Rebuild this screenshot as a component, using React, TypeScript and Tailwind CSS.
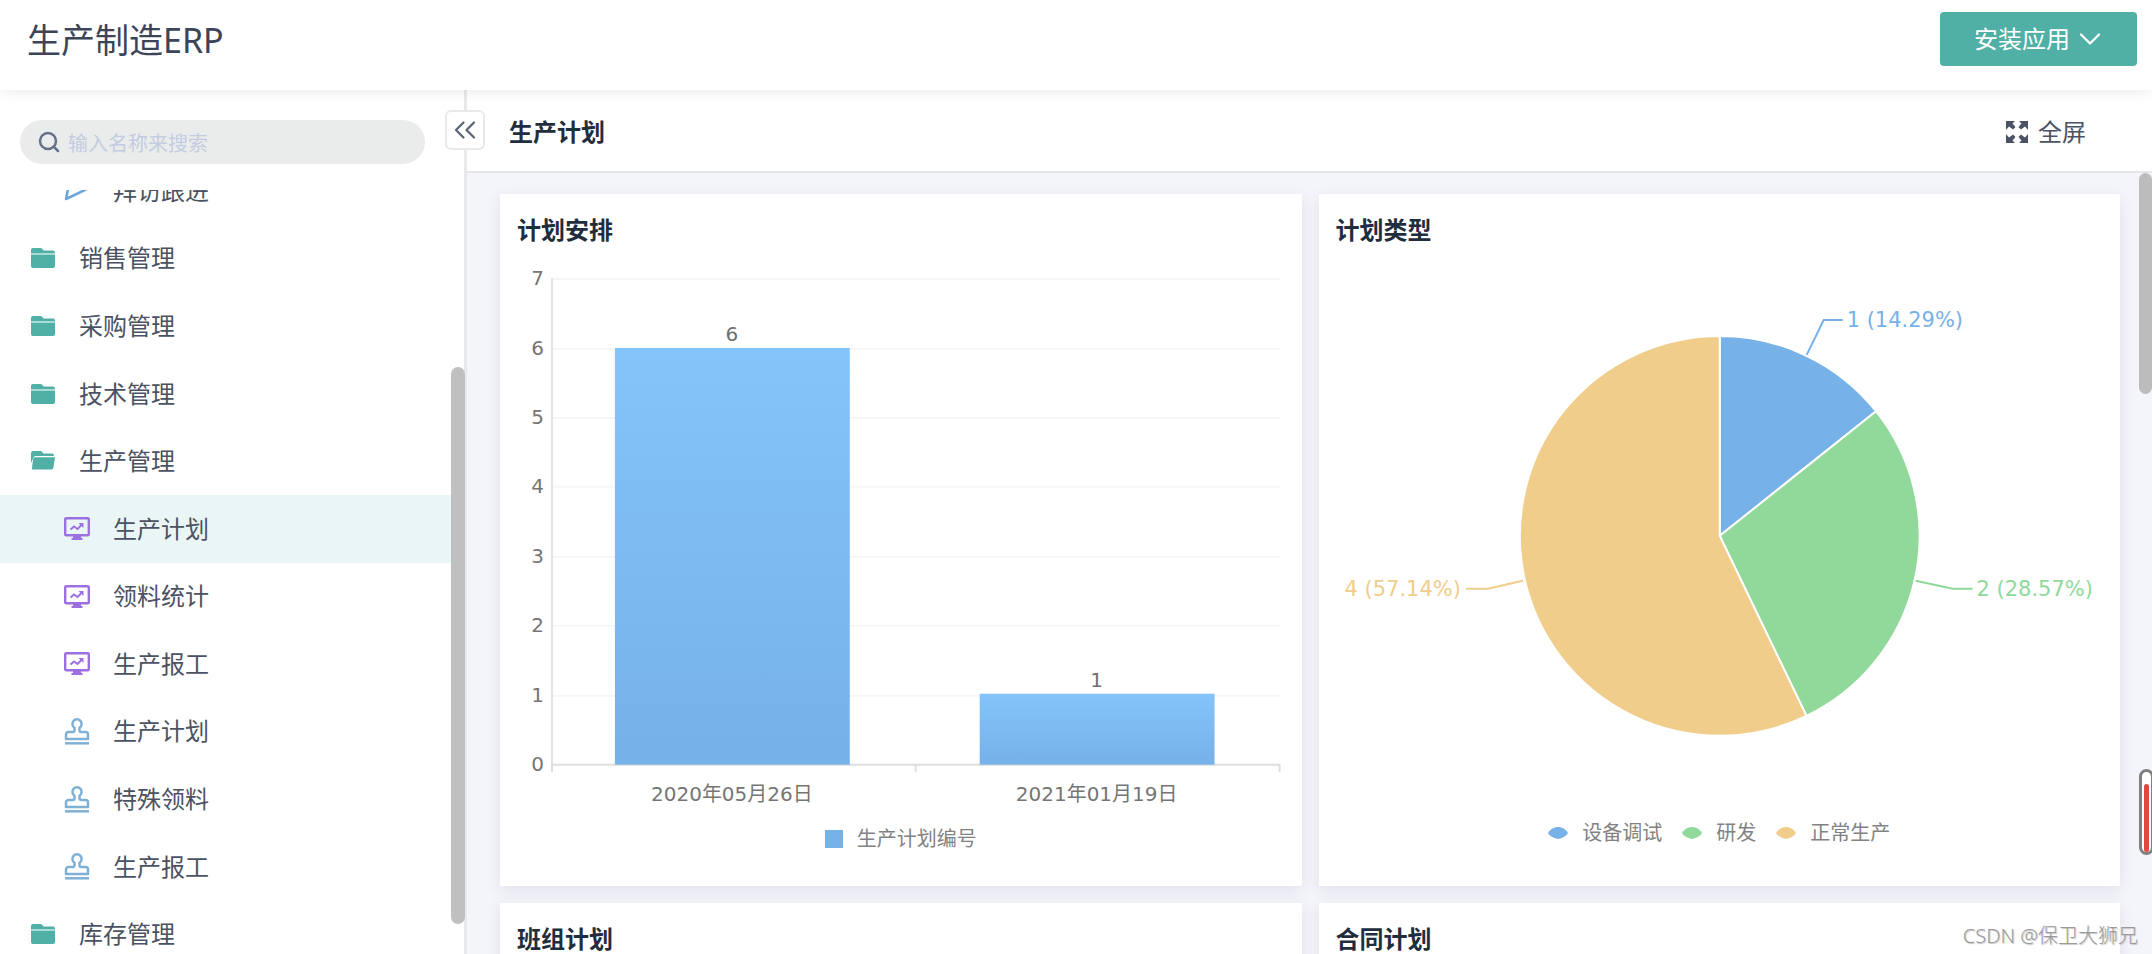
import type { ReactNode } from "react";
import { ChevronDown, ChevronsLeft, Search } from "lucide-react";
import { clsx } from "clsx";

type NavIcon = "folder" | "folderOpen" | "board" | "stamp" | "plane";

interface NavItem {
  id: string;
  label: string;
  icon: NavIcon;
  nested?: boolean;
  selected?: boolean;
}

interface Slice {
  label: string;
  value: number;
  color: string;
  textClass: string;
  leader: string;
  textX: number;
  textY: number;
  anchor: "start" | "end";
}

const navItems: NavItem[] = [
  { id: "visit", label: "拜访跟进", icon: "plane", nested: true },
  { id: "sales", label: "销售管理", icon: "folder" },
  { id: "purchase", label: "采购管理", icon: "folder" },
  { id: "tech", label: "技术管理", icon: "folder" },
  { id: "production", label: "生产管理", icon: "folderOpen" },
  { id: "plan-board", label: "生产计划", icon: "board", nested: true, selected: true },
  { id: "material-board", label: "领料统计", icon: "board", nested: true },
  { id: "report-board", label: "生产报工", icon: "board", nested: true },
  { id: "plan-form", label: "生产计划", icon: "stamp", nested: true },
  { id: "material-form", label: "特殊领料", icon: "stamp", nested: true },
  { id: "report-form", label: "生产报工", icon: "stamp", nested: true },
  { id: "stock", label: "库存管理", icon: "folder" }
];

const bars = [
  { date: "2020年05月26日", value: 6, x: 115, top: 94 },
  { date: "2021年01月19日", value: 1, x: 480, top: 440 }
];

const slices: Slice[] = [
  { label: "设备调试", value: 1, color: "#76b1e8", textClass: "fill-[#76b1e8]", leader: "M488 100 505 65 524 65", textX: 528, textY: 72, anchor: "start" },
  { label: "研发", value: 2, color: "#90d99a", textClass: "fill-[#90d99a]", leader: "M597 326 634 334 654 334", textX: 658, textY: 341, anchor: "start" },
  { label: "正常生产", value: 4, color: "#f0cd8a", textClass: "fill-[#f0cd8a]", leader: "M204 326 169 334 147 334", textX: 142, textY: 341, anchor: "end" }
];

const PIE = { cx: 401, cy: 281, r: 200 };

function slicePath(start: number, end: number) {
  const point = (turn: number) => {
    const angle = turn * Math.PI * 2;
    return `${PIE.cx + PIE.r * Math.sin(angle)} ${PIE.cy - PIE.r * Math.cos(angle)}`;
  };
  return `M${PIE.cx} ${PIE.cy} L${point(start)} A${PIE.r} ${PIE.r} 0 ${end - start > 0.5 ? 1 : 0} 1 ${point(end)} Z`;
}

function NavGlyph({ icon }: { icon: NavIcon }) {
  switch (icon) {
    case "folder":
      return (
        <svg viewBox="0 0 24 20" className="h-5 w-6" aria-hidden="true">
          <path d="M0 5V2a2 2 0 0 1 2-2h7.500a2 2 0 0 1 1.600.8L12.500 2.500H22a2 2 0 0 1 2 2V5Z" fill="#50b0a5" />
          <path d="M0 6.500h24V18a2 2 0 0 1-2 2H2a2 2 0 0 1-2-2Z" fill="#50b0a5" />
          <path d="M0 5h24v1.500H0Z" fill="#a9dad4" />
        </svg>
      );
    case "folderOpen":
      return (
        <svg viewBox="0 0 24 20" className="h-5 w-6" aria-hidden="true">
          <path d="M0 12V2a2 2 0 0 1 2-2h7.500a2 2 0 0 1 1.600.8L12.500 2.500H21a2 2 0 0 1 2 2V5H4.500a2 2 0 0 0-2 1.600Z" fill="#50b0a5" />
          <path d="M4 6.300H24l-1.600 10.500a2 2 0 0 1-2 1.700H.8L2.100 7.900a2 2 0 0 1 1.900-1.600Z" fill="#50b0a5" />
        </svg>
      );
    case "board":
      return (
        <svg viewBox="0 0 26 23" className="h-[23px] w-[26px]" fill="none" stroke="#9d70e2" aria-hidden="true">
          <rect x="1.200" y="1.200" width="23.600" height="17" rx="1" strokeWidth="2.400" />
          <path d="M9 18h8v3h1.500v2h-11v-2H9Z" fill="#9d70e2" stroke="none" />
          <path d="m6.500 12.500 3.500-3 3.500 2.500 4-4" strokeWidth="2" />
          <path d="M14.500 6h5v5Z" fill="#9d70e2" stroke="none" />
        </svg>
      );
    case "stamp":
      return (
        <svg viewBox="0 0 26 27" className="h-[27px] w-[26px]" fill="none" stroke="#7fb0d6" strokeWidth="2.500" aria-hidden="true">
          <path
            d="M10.500 9.800a4.600 4.600 0 1 1 5 0V12.500a1.500 1.500 0 0 0 1.500 1.500h4.500a2.500 2.500 0 0 1 2.500 2.500V21H2v-4.500A2.500 2.500 0 0 1 4.500 14H9a1.500 1.500 0 0 0 1.500-1.500Z"
            strokeLinejoin="round"
          />
          <path d="M1 25.300h24" />
        </svg>
      );
    case "plane":
      return (
        <svg viewBox="0 0 26 24" className="h-6 w-[26px]" fill="none" stroke="#6aa5d8" strokeWidth="2.500" strokeLinejoin="round" aria-hidden="true">
          <path d="M25 9 2 20 5 5" />
        </svg>
      );
  }
}

function Sidebar() {
  return (
    <aside className="relative flex w-[467px] shrink-0 flex-col border-r-3 border-[#e9e9ea] bg-white pt-[30px]">
      <div className="ml-5 mr-[39px] flex h-11 shrink-0 items-center gap-[7px] rounded-full bg-[#eaecec] pl-[17px]">
        <Search className="size-6 text-[#66708a]" strokeWidth={2.5} aria-hidden="true" />
        <input
          type="search"
          aria-label="输入名称来搜索"
          className="h-11 min-w-0 flex-1 bg-transparent pt-[2px] text-xl text-[#141e31] outline-none placeholder:text-[#c3cce0]"
          placeholder="输入名称来搜索"
        />
      </div>

      <nav className="mt-[26px] min-h-0 flex-1 overflow-hidden">
        <ul className="-mt-[33px] grid h-[811px] auto-rows-fr">
          {navItems.map((item) => (
            <li key={item.id} className="flex">
              <a
                href={`#${item.id}`}
                aria-current={item.selected ? "page" : undefined}
                className={clsx(
                  "flex flex-1 items-center text-2xl text-[#4a5263]",
                  item.nested ? "gap-[23px] pl-16" : "gap-6 pl-[31px]",
                  item.selected && "bg-[#eaf6f6]"
                )}
              >
                <NavGlyph icon={item.icon} />
                {item.label}
              </a>
            </li>
          ))}
        </ul>
      </nav>

      <div className="absolute -right-[1px] bottom-[30px] top-[277px] w-[14px] rounded-full bg-[#c0c0c0]" />
      <button
        type="button"
        aria-label="收起菜单"
        className="absolute -right-[21px] top-5 z-10 grid size-10 place-items-center rounded-md border-2 border-[#e9e9ea] bg-white text-[#5b6476]"
      >
        <ChevronsLeft className="size-9" strokeWidth={1.5} aria-hidden="true" />
      </button>
    </aside>
  );
}

function Card({ title, children }: { title: string; children?: ReactNode }) {
  return (
    <section className="flex min-h-[692px] flex-col bg-white shadow-[0_4px_14px_rgba(60,40,100,0.10)]">
      <h2 className="px-[17px] pb-[9px] pt-5 text-2xl font-bold text-[#1f2d3d]">{title}</h2>
      {children}
    </section>
  );
}

function PlanBarChart() {
  return (
    <>
      <svg viewBox="0 0 802 570" className="w-full font-[DejaVu_Sans,Noto_Sans_CJK_SC,sans-serif] text-xl" role="img" aria-label="计划安排">
        <defs>
          <linearGradient id="bar-fill" x1="0" y1="0" x2="0" y2="1">
            <stop offset="0" stopColor="#83c4fb" />
            <stop offset="1" stopColor="#76b1e8" />
          </linearGradient>
        </defs>
        <g transform="translate(0 -61)">
          {[0, 1, 2, 3, 4, 5, 6, 7].map((tick) => {
            const y = Math.round(571 - tick * 69.4);
            return (
              <g key={tick}>
                {tick > 0 ? <path d={`M51 ${y}H780`} stroke="#f6f6f7" strokeWidth="2" /> : null}
                <text x="44" y={y + 6} textAnchor="end" className="fill-[#757575]">
                  {tick}
                </text>
              </g>
            );
          })}
          <path d="M52 84V571" stroke="#e4e4e4" strokeWidth="2" />
          <path d="M51 571H781M52 571V578M416 571V578M780 571V578" stroke="#dedede" strokeWidth="2" fill="none" />
          {bars.map((bar) => (
            <g key={bar.date} textAnchor="middle">
              <rect x={bar.x} y={bar.top + 60} width="235" height={511 - bar.top} fill="url(#bar-fill)" />
              <text x={bar.x + 117} y={bar.top + 53} className="fill-[#6f6f6f]">
                {bar.value}
              </text>
              <text x={bar.x + 117} y="607" className="fill-[#757575]">
                {bar.date}
              </text>
            </g>
          ))}
        </g>
      </svg>
      <div className="flex items-center justify-center gap-[14px] text-xl text-[#828282]">
        <span className="size-[18px] bg-[#76b1e8]" />
        生产计划编号
      </div>
    </>
  );
}

function PlanPieChart() {
  const total = slices.reduce((sum, slice) => sum + slice.value, 0);
  let turn = 0;

  return (
    <>
      <svg viewBox="0 0 802 564" className="w-full font-[DejaVu_Sans,sans-serif] text-[21px]" role="img" aria-label="计划类型">
        {slices.map((slice) => {
          const start = turn;
          turn += slice.value / total;
          return (
            <g key={slice.label}>
              <path d={slicePath(start, turn)} fill={slice.color} stroke="#ffffff" strokeWidth="2" strokeLinejoin="round" />
              <path d={slice.leader} fill="none" stroke={slice.color} strokeWidth="2" />
              <text x={slice.textX} y={slice.textY} textAnchor={slice.anchor} className={slice.textClass}>
                {`${slice.value} (${((slice.value / total) * 100).toFixed(2)}%)`}
              </text>
            </g>
          );
        })}
      </svg>
      <ul className="flex items-center justify-center gap-5 text-xl text-[#828282]">
        {slices.map((slice) => (
          <li key={slice.label} className="flex items-center gap-[14px]">
            <svg viewBox="0 0 20 12" className="h-3 w-5" aria-hidden="true">
              <path d="M10 12Q4 10.500 1 7.500-1 5.500 2 3.500 5 0 10 0T18 3.500Q21 5.500 19 7.500 16 10.500 10 12Z" fill={slice.color} />
            </svg>
            {slice.label}
          </li>
        ))}
      </ul>
    </>
  );
}

export default function App() {
  return (
    <div className="relative flex h-screen flex-col overflow-hidden bg-white font-[Noto_Sans,Noto_Sans_CJK_SC,sans-serif]">
      <header className="z-20 flex h-[90px] shrink-0 items-start justify-between bg-white pl-[27px] pr-[15px] pt-3 shadow-[0_2px_12px_rgba(0,0,0,0.08)]">
        <h1 className="text-[34px] leading-[56px] text-[#3b4557]">生产制造ERP</h1>
        <button type="button" className="flex h-[54px] items-center gap-[2px] rounded bg-[#50b0a5] pl-[34px] pr-[29px] text-2xl text-white">
          安装应用
          <ChevronDown className="size-9" strokeWidth={1.5} aria-hidden="true" />
        </button>
      </header>

      <div className="flex min-h-0 flex-1">
        <Sidebar />
        <main className="flex min-w-0 flex-1 flex-col">
          <div className="z-[1] flex h-[83px] shrink-0 items-center justify-between border-b-2 border-[#e4e5e8] bg-white pl-[42px] pr-[66px] pt-[2px]">
            <h2 className="text-2xl font-bold text-[#1f2d3d]">生产计划</h2>
            <button type="button" className="flex items-center gap-[10px] text-2xl text-[#4a5263]">
              <svg viewBox="0 0 22 22" className="size-[22px]" aria-hidden="true">
                <path
                  d="M0 0h9L6.500 2.500 9.500 6 7 8.500 3 5.500 0 9ZM22 0v9l-3-3.500L15 8.500 12.500 6 15.500 2.500 13 0ZM22 22h-9l2.500-2.500-3-3.500 2.500-2.500 4 3 3-3.500ZM0 22v-9l3 3.500 4-3L9.500 16l-3 3.500L9 22Z"
                  fill="#4a5263"
                />
              </svg>
              全屏
            </button>
          </div>

          <div className="relative min-h-0 flex-1 overflow-hidden bg-[#f4f5fa] pl-[33px] pr-8 pt-[21px]">
            <div className="grid grid-cols-2 gap-[17px]">
              <Card title="计划安排">
                <PlanBarChart />
              </Card>
              <Card title="计划类型">
                <PlanPieChart />
              </Card>
              <Card title="班组计划" />
              <Card title="合同计划" />
            </div>
            <div className="absolute right-0 top-0 h-[221px] w-[13px] rounded-full bg-[#bcbcbc]" />
          </div>
        </main>
      </div>

      <div className="absolute -right-[2px] bottom-[99px] z-30 flex h-[86px] w-[15px] justify-center rounded-full border-3 border-[#808080] bg-white pt-3">
        <span className="w-[5px] rounded-full bg-[#e2483f]" />
      </div>
      <p className="absolute bottom-1 right-[14px] z-30 text-xl font-light text-[#9a9a9a] [text-shadow:1px_1px_1px_#c4c4c4]">CSDN @保卫大狮兄</p>
    </div>
  );
}
